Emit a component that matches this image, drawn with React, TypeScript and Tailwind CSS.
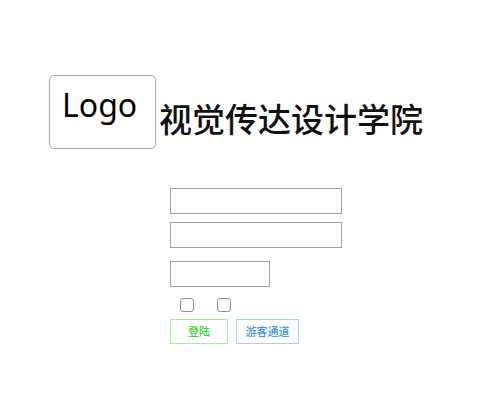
import React from 'react';

export default function App() {
  return (
    <div className="w-[500px] h-[400px] bg-white font-['Noto_Sans','Noto_Sans_CJK_SC',sans-serif]">
      {/* ヘッダー */}
      <div className="flex items-end pt-[75px] pl-[49px]">
        <div className="w-[107px] h-[74px] border border-[#a8a8a8] rounded-[5px] pl-[12px] pt-[9px]">
          <span className="text-[32px] leading-[40px] text-black">Logo</span>
        </div>
        <div className="ml-[3px] mb-[11px] text-[33px] leading-[40px] font-medium text-[#111] font-['Noto_Sans_CJK_SC',sans-serif]">
          视觉传达设计学院
        </div>
      </div>

      {/* フォーム */}
      <div className="flex flex-col pl-[170px] pt-[39px]">
        <input className="w-[172px] h-[26px] border border-[#a0a0a0] outline-none" />
        <input className="w-[172px] h-[26px] border border-[#a0a0a0] outline-none mt-[8px]" />
        <input className="w-[100px] h-[26px] border border-[#a0a0a0] outline-none mt-[13px]" />
        <div className="flex pl-[10px] mt-[11px] gap-[23px]">
          <span className="w-[14px] h-[14px] border border-[#8f8f8f] rounded-[3px]" />
          <span className="w-[14px] h-[14px] border border-[#8f8f8f] rounded-[3px]" />
        </div>
        <div className="flex mt-[7px] gap-[8px]">
          <button className="w-[58px] h-[25px] border border-[#9ef09e] text-[11px] font-medium text-[#3ad63a] font-['Noto_Sans_CJK_SC',sans-serif]">
            登陆
          </button>
          <button className="w-[63px] h-[25px] border border-[#a6d2ef] text-[11px] font-medium text-[#3b98d8] font-['Noto_Sans_CJK_SC',sans-serif]">
            游客通道
          </button>
        </div>
      </div>
    </div>
  );
}
